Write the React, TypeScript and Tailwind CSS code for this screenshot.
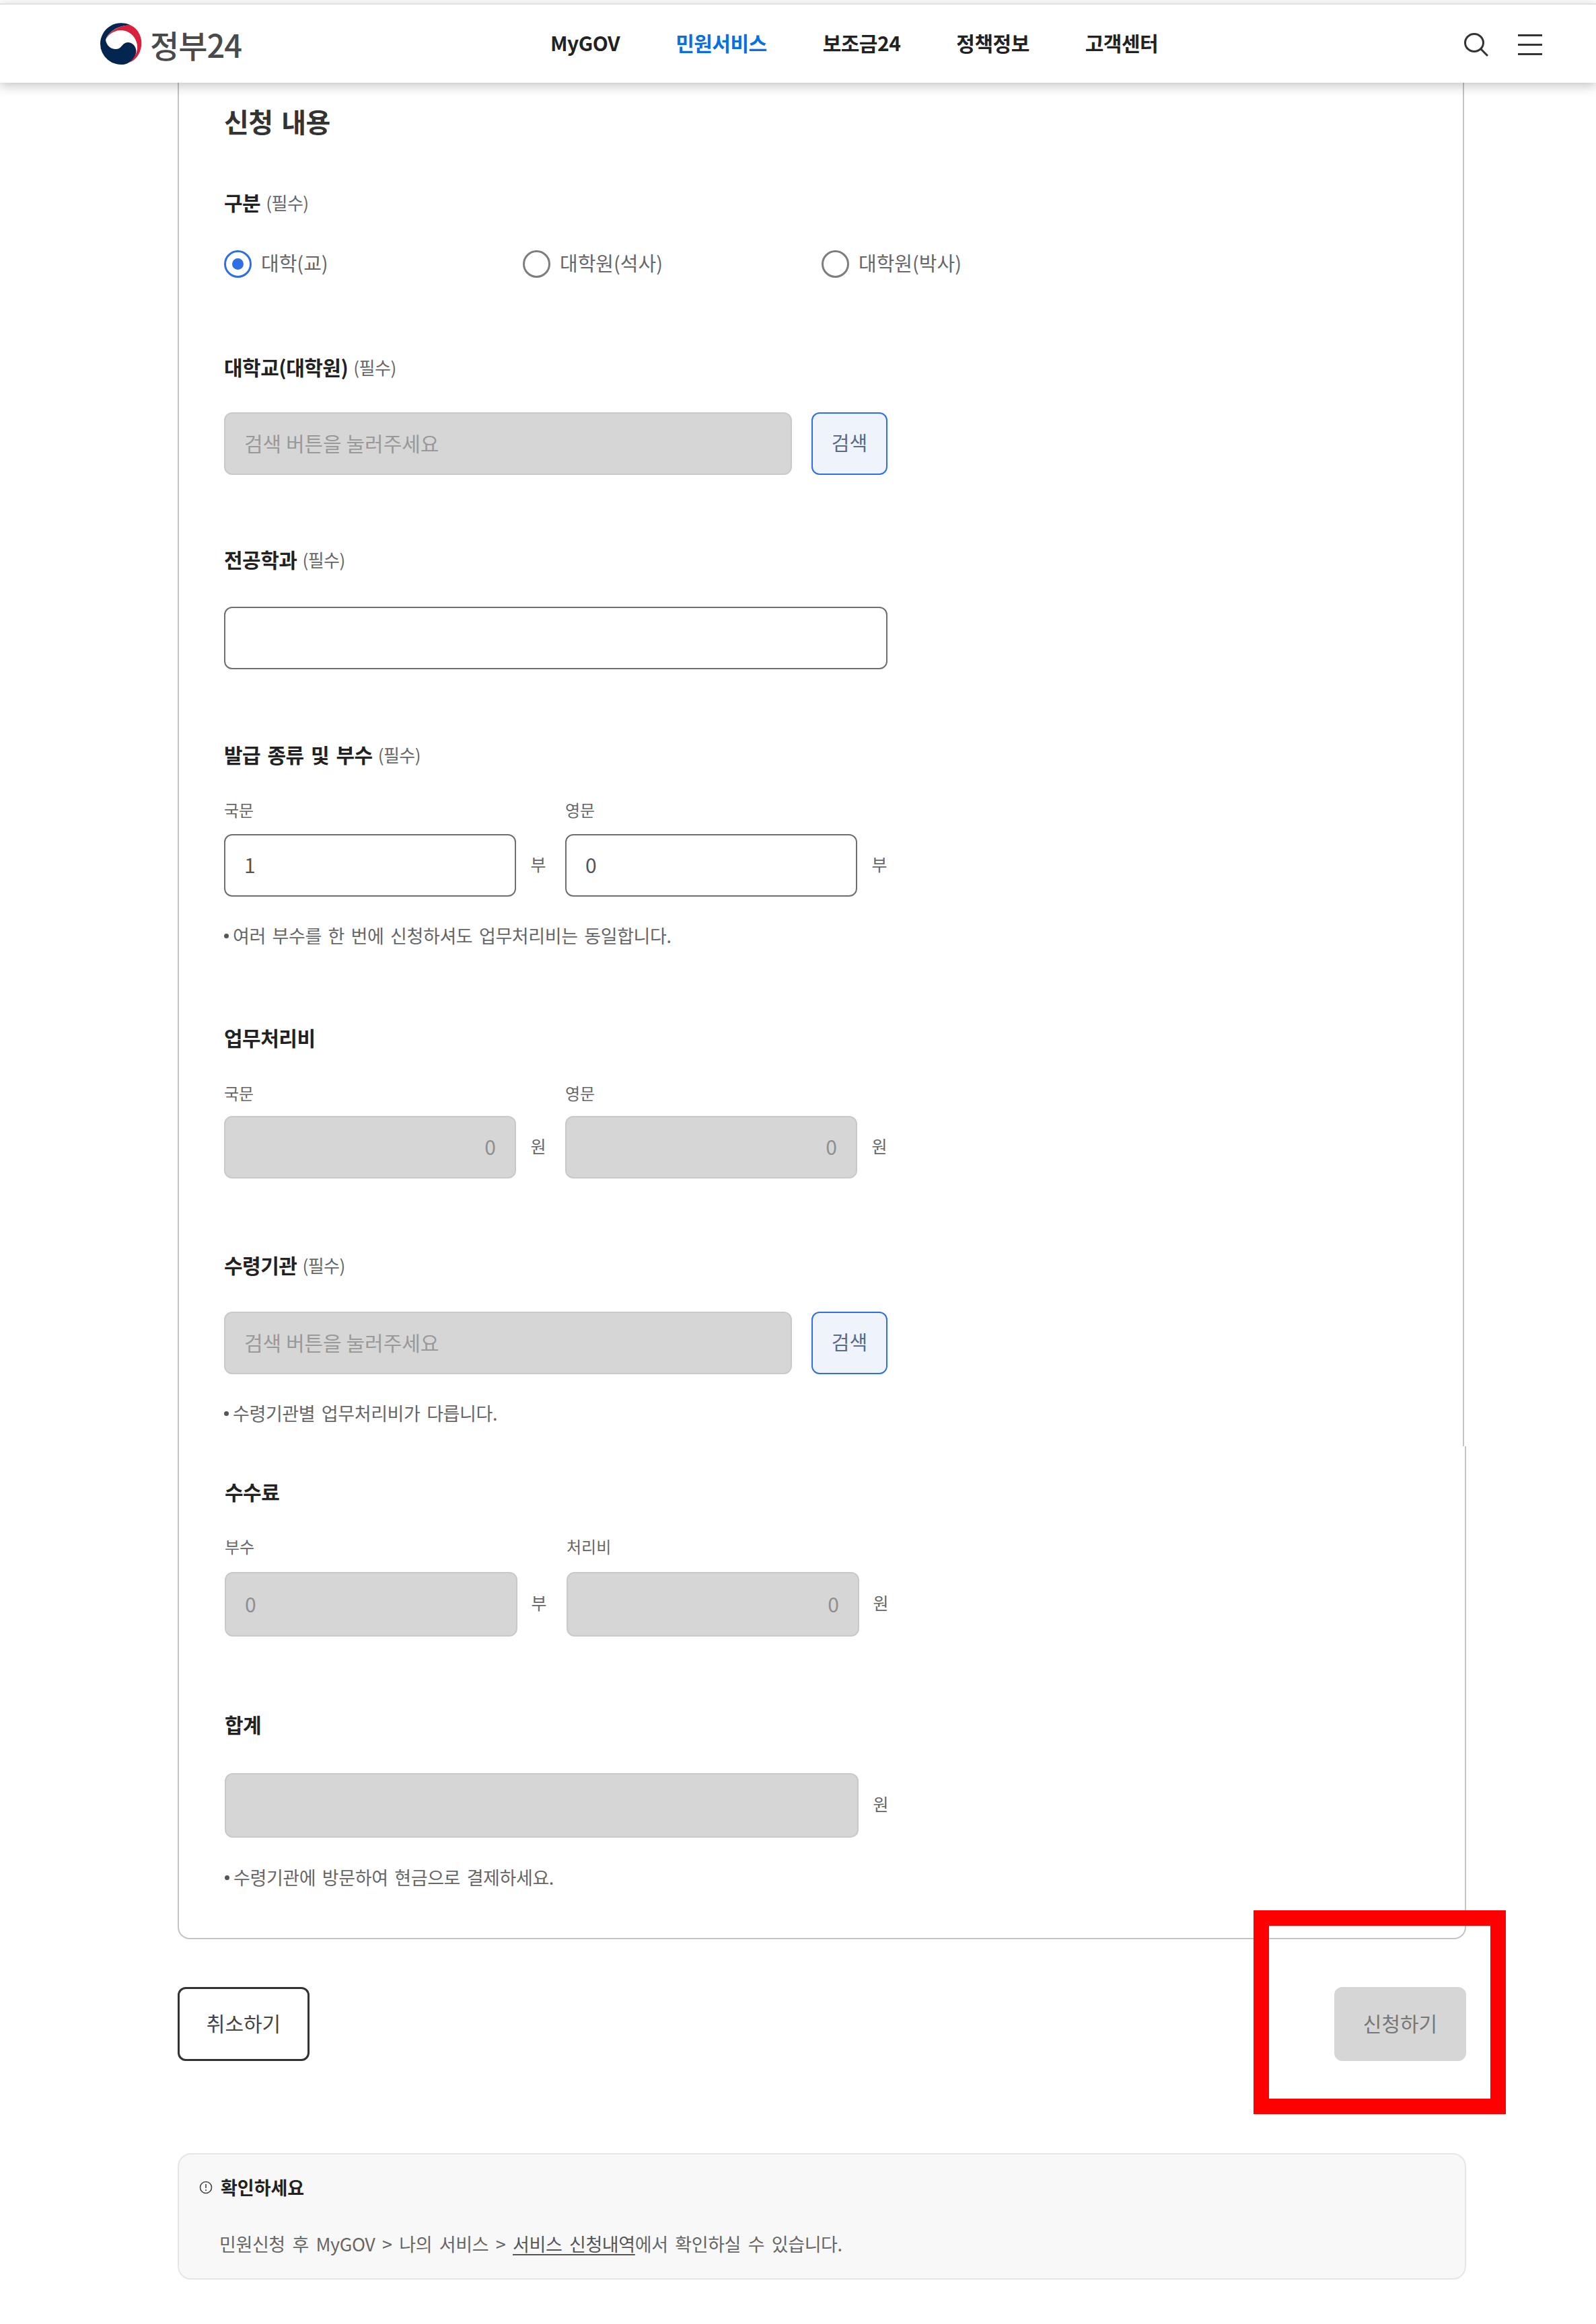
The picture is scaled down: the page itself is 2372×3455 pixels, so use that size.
const FILLED = 'h-[93px] rounded-[12px] border-2 border-[#c9c9c9] bg-[#d6d6d6] px-[28px] pb-[3px] text-[30px] text-[#8f8f8f] placeholder:text-[#999999] outline-none';
const EMPTY = 'h-[93px] rounded-[12px] border-2 border-[#6f6f6f] bg-white px-[28px] pb-[3px] text-[30px] text-[#555555] outline-none';

function Logo() {
  return (
    <div className="ml-[148px] flex items-center">
      <svg width="64" height="64" viewBox="0 0 64 64">
        <path
          d="M47 5A31 31 0 0 0 1 32A31 31 0 0 0 38 62.4C48 60 56 50 54 40C52 32 44 28 38 31C33 33 32 40 24 40C16 40 10 34 9 26C13 14 30 3 47 5Z"
          fill="#02264f"
        />
        <path
          d="M9 27C13 14 30 3 47 5C58 10 64 24 62 36C60 48 53 57 44 60C52 54 57 44 56 34C54 20 42 11 30 12C20 13 12 19 9 27Z"
          fill="#d9203c"
        />
      </svg>
      <span className="ml-[11px] text-[47px] leading-none font-medium tracking-[-1px] text-[#4a4a4a]">정부24</span>
    </div>
  );
}

function Header() {
  return (
    <header className="relative z-10 h-[118px] border-t-2 border-[#e2e2e2] bg-white shadow-[0_4px_16px_rgba(0,0,0,0.25)] flex items-center">
      <Logo />
      <nav className="absolute left-[818px] top-[32px] flex gap-[83px] text-[30px] leading-[48px] font-bold text-[#222222] tracking-[-0.5px]">
        <span>MyGOV</span>
        <span className="text-[#0b6fdf]">민원서비스</span>
        <span>보조금24</span>
        <span>정책정보</span>
        <span>고객센터</span>
      </nav>
      <svg className="absolute left-[2175px] top-[41px]" width="37" height="36" viewBox="0 0 37 36" fill="none" stroke="#333333" strokeWidth="3">
        <ellipse cx="16" cy="15.5" rx="13.5" ry="13" />
        <path d="M26 25L36 35" />
      </svg>
      <div className="absolute left-[2256px] top-[44px] flex flex-col gap-[11px]">
        <div className="w-[36px] h-[3px] bg-[#333333]" />
        <div className="w-[36px] h-[3px] bg-[#333333]" />
        <div className="w-[36px] h-[3px] bg-[#333333]" />
      </div>
    </header>
  );
}

function Label({ text, required, className }: { text: string; required?: boolean; className: string }) {
  return (
    <div className={`h-10 flex items-center pb-[3px] text-[30px] font-bold text-[#222222] tracking-[-0.5px] ${className}`}>
      {text}
      {required && <span className="ml-[8px] text-[26px] font-normal text-[#666666]">(필수)</span>}
    </div>
  );
}

function SubLabel({ text, className }: { text: string; className: string }) {
  return <div className={`h-8 flex items-center pb-[2px] text-[24px] text-[#666666] ${className}`}>{text}</div>;
}

function Note({ text, className }: { text: string; className: string }) {
  return (
    <div className={`h-9 flex items-center pb-[2px] text-[27px] text-[#666666] tracking-[-0.4px] ${className}`}>
      <span className="mr-[6px] size-[7px] rounded-full bg-[#555555]" />
      {text}
    </div>
  );
}

function Radio({ text, checked }: { text: string; checked?: boolean }) {
  return (
    <div className="w-[444px] flex items-center">
      <span className={`size-[41px] rounded-full border-[3px] flex items-center justify-center ${checked ? 'border-[#2f6fe4]' : 'border-[#7d7d7d]'}`}>
        {checked && <span className="size-[17px] rounded-full bg-[#2f6fe4]" />}
      </span>
      <span className="ml-[14px] -mt-[3px] text-[29px] text-[#666666]">{text}</span>
    </div>
  );
}

function SearchField() {
  return (
    <div className="flex gap-[29px]">
      <input disabled placeholder="검색 버튼을 눌러주세요" className={`w-[844px] ${FILLED}`} />
      <button className="w-[113px] h-[93px] pb-[3px] rounded-[12px] border-2 border-[#2f6fe4] bg-[#eef3fc] text-[29px] text-[#5b6b85]">검색</button>
    </div>
  );
}

type Cell = { label: string; value: string; unit: string; right?: boolean };

function AmountRow({ cells, filled, labelGap, tall, className }: { cells: Cell[]; filled?: boolean; labelGap: string; tall?: boolean; className: string }) {
  return (
    <div className={`flex gap-[73px] ${className}`}>
      {cells.map((cell) => (
        <div key={cell.label} className="relative">
          <SubLabel text={cell.label} className={labelGap} />
          <div className="flex items-center">
            <input
              disabled
              value={cell.value}
              className={`${filled ? FILLED : EMPTY} ${tall ? 'w-[435px] h-[96px]' : 'w-[434px]'} ${cell.right ? 'text-right' : ''}`}
            />
            <span className="absolute left-[455px] -mt-[4px] text-[25px] text-[#666666] w-[24px] text-center">{cell.unit}</span>
          </div>
        </div>
      ))}
    </div>
  );
}

export default function App() {
  return (
    <div className="relative min-h-[3455px] pt-[5px] bg-white font-['Noto_Sans_CJK_KR','Noto_Sans',sans-serif] [word-spacing:4px]">
      <Header />

      <main className="ml-[264px] w-[1915px]">
        <section className="w-[1912px] border-x-2 border-[#c4c4c4] pl-[67px] pt-[38px] pb-[30px]">
          <h2 className="h-10 flex items-center pb-[3px] text-[40px] font-bold text-[#333333] tracking-[-0.5px]">신청 내용</h2>

          <Label text="구분" required className="mt-[81px]" />
          <div className="mt-[50px] flex">
            <Radio text="대학(교)" checked />
            <Radio text="대학원(석사)" />
            <Radio text="대학원(박사)" />
          </div>

          <Label text="대학교(대학원)" required className="mt-[114px] mb-[46px]" />
          <SearchField />

          <Label text="전공학과" required className="mt-[107px] mb-[49px]" />
          <input className={`w-[986px] ${EMPTY}`} />

          <Label text="발급 종류 및 부수" required className="mt-[108px]" />
          <AmountRow
            className="mt-[46px]"
            labelGap="mb-[19px]"
            cells={[
              { label: '국문', value: '1', unit: '부' },
              { label: '영문', value: '0', unit: '부' },
            ]}
          />
          <Note text="여러 부수를 한 번에 신청하셔도 업무처리비는 동일합니다." className="mt-[41px]" />

          <Label text="업무처리비" className="mt-[114px]" />
          <AmountRow
            className="mt-[46px]"
            labelGap="mb-[17px]"
            filled
            cells={[
              { label: '국문', value: '0', unit: '원', right: true },
              { label: '영문', value: '0', unit: '원', right: true },
            ]}
          />

          <Label text="수령기관" required className="mt-[110px] mb-[48px]" />
          <SearchField />
          <Note text="수령기관별 업무처리비가 다릅니다." className="mt-[41px]" />
        </section>

        <section className="rounded-b-[18px] border-x-2 border-b-2 border-[#c4c4c4] pl-[68px] pb-[71px]">
          <Label text="수수료" className="pt-[49px] h-[89px]" />
          <AmountRow
            className="mt-[45px]"
            labelGap="mb-[21px]"
            filled
            tall
            cells={[
              { label: '부수', value: '0', unit: '부' },
              { label: '처리비', value: '0', unit: '원', right: true },
            ]}
          />

          <Label text="합계" className="mt-[112px] mb-[51px]" />
          <div className="relative flex items-center">
            <input disabled className={`w-[942px] ${FILLED} h-[96px]`} />
            <span className="absolute left-[963px] -mt-[4px] text-[25px] text-[#666666] w-[24px] text-center">원</span>
          </div>
          <Note text="수령기관에 방문하여 현금으로 결제하세요." className="mt-[42px]" />
        </section>

        <div className="mt-[71px] flex justify-between">
          <button className="w-[196px] h-[110px] pb-[3px] rounded-[12px] border-[3px] border-[#333333] bg-white text-[30px] text-[#444444]">취소하기</button>
          <button className="w-[196px] h-[110px] pb-[3px] rounded-[12px] bg-[#d6d6d6] text-[30px] text-[#777777]">신청하기</button>
        </div>

        <aside className="mt-[137px] h-[188px] rounded-[20px] border-2 border-[#e6e6e6] bg-[#f8f8f8] pl-[30px] pt-[29px]">
          <div className="flex items-center h-10 text-[27px] font-bold text-[#222222]">
            <svg className="mr-[12px]" width="20" height="20" viewBox="0 0 20 20" fill="none" stroke="#444444" strokeWidth="1.6">
              <circle cx="10" cy="10" r="8.5" />
              <path d="M10 5V11M10 13V15" />
            </svg>
            확인하세요
          </div>
          <p className="mt-[44px] pl-[30px] h-10 flex items-center text-[27px] text-[#666666] tracking-[-0.4px] [word-spacing:5px] whitespace-pre">
            민원신청 후 MyGOV {'>'} 나의 서비스 {'>'} <span className="underline underline-offset-4 text-[#555555]">서비스 신청내역</span>에서 확인하실 수 있습니다.
          </p>
        </aside>
      </main>

      <div className="absolute left-[1863px] top-[2840px] w-[375px] h-[303px] border-[23px] border-[#ff0000]" />
    </div>
  );
}
